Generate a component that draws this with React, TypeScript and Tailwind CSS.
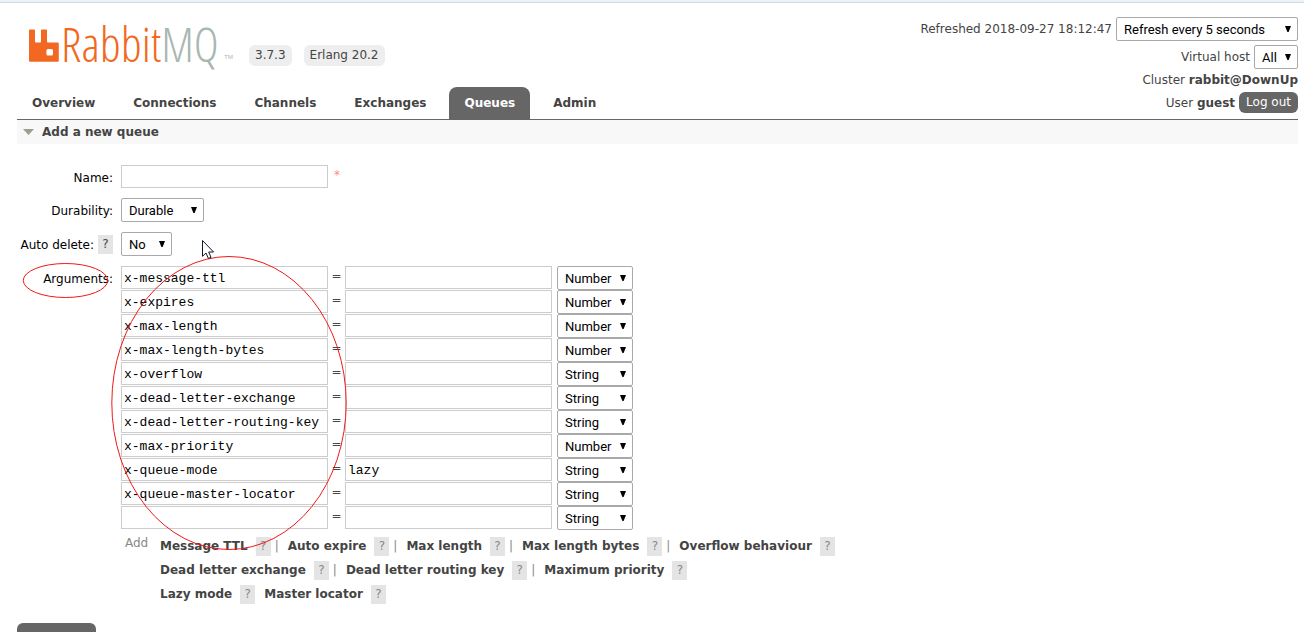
import React from "react";

type Kind = "Number" | "String";

const tabs = ["Overview", "Connections", "Channels", "Exchanges", "Queues", "Admin"];

const queueArguments: { key: string; value: string; kind: Kind }[] = [
  { key: "x-message-ttl", value: "", kind: "Number" },
  { key: "x-expires", value: "", kind: "Number" },
  { key: "x-max-length", value: "", kind: "Number" },
  { key: "x-max-length-bytes", value: "", kind: "Number" },
  { key: "x-overflow", value: "", kind: "String" },
  { key: "x-dead-letter-exchange", value: "", kind: "String" },
  { key: "x-dead-letter-routing-key", value: "", kind: "String" },
  { key: "x-max-priority", value: "", kind: "Number" },
  { key: "x-queue-mode", value: "lazy", kind: "String" },
  { key: "x-queue-master-locator", value: "", kind: "String" },
  { key: "", value: "", kind: "String" },
];

const shortcuts: { items: string[]; divided: boolean }[] = [
  {
    items: ["Message TTL", "Auto expire", "Max length", "Max length bytes", "Overflow behaviour"],
    divided: true,
  },
  { items: ["Dead letter exchange", "Dead letter routing key", "Maximum priority"], divided: true },
  { items: ["Lazy mode", "Master locator"], divided: false },
];

function Select({
  className,
  options,
  value,
  ...rest
}: {
  className: string;
  options: string[];
  value: string;
  id?: string;
  "aria-label"?: string;
}) {
  return (
    <span className={`relative inline-block h-6 align-top ${className}`}>
      <select
        {...rest}
        defaultValue={value}
        className="block h-6 w-full appearance-none rounded-xs border border-[#a9a9a9] bg-white pl-[7px] pr-4 pt-px font-['Roboto',sans-serif] text-[13px] leading-5 text-black"
      >
        {options.map((o) => (
          <option key={o}>{o}</option>
        ))}
      </select>
      <svg
        className="pointer-events-none absolute right-[7px] top-[9px] h-[6px] w-[6px]"
        viewBox="0 0 6 6"
        aria-hidden="true"
      >
        <path d="M0 0H6L3.6 6H2.4Z" fill="#000" />
      </svg>
    </span>
  );
}

function TextField({ value = "", ...rest }: { value?: string; id?: string; "aria-label"?: string }) {
  return (
    <input
      {...rest}
      type="text"
      defaultValue={value}
      className="block h-[23px] w-[207px] border border-[#ccc] bg-white px-0.5 pt-0.5 font-['Liberation_Mono',monospace] text-[13px] text-black"
    />
  );
}

function Help({ muted = false, topic }: { muted?: boolean; topic: string }) {
  return (
    <button
      type="button"
      aria-label={`Help: ${topic}`}
      className={`h-[19px] w-[15px] bg-[#e4e4e4] text-center leading-[19px] ${muted ? "text-[#888]" : "text-[#444]"}`}
    >
      ?
    </button>
  );
}

function Logo() {
  return (
    <a href="#/" className="flex w-[204px] items-end" aria-label="RabbitMQ">
      <svg className="h-[33px] w-[30px] shrink-0" viewBox="0 0 30 33" aria-hidden="true">
        <path
          fill="#f26822"
          fillRule="evenodd"
          d="M1 0.6H5.2Q6 .6 6 1.4V12.4Q6 13.4 7 13.4H11Q12 13.4 12 12.4V1.4Q12 .6 12.8 .6H17Q18 .6 18 1.6V12.4Q18 13.4 19 13.4H28.8Q29.8 13.4 29.8 14.4V31.8Q29.8 32.8 28.8 32.8H1Q0 32.8 0 31.8V1.6Q0 .6 1 .6ZM19 20Q17.4 20 17.4 21.6V25Q17.4 26.6 19 26.6H22.4Q24 26.6 24 25V21.6Q24 20 22.4 20Z"
        />
      </svg>
      <span className="pl-0.5 font-['Open_Sans_Condensed_Light','Roboto_Condensed_Light','Roboto_Condensed','Liberation_Sans',sans-serif] text-[48px] leading-9 text-[#f26822]">
        Rabbit<span className="text-[#a9b7b0]">MQ</span>
      </span>
      <span className="ml-auto font-['Liberation_Sans',sans-serif] text-[6px] leading-[9px] text-[#a9b7b0]">TM</span>
    </a>
  );
}

function Header() {
  return (
    <header className="flex items-end justify-between border-b border-[#666] pt-[14px]">
      <div>
        <div className="flex items-end gap-4 pb-[21px] pl-3">
          <div className="pb-1">
            <Logo />
          </div>
          <div className="flex gap-3">
            <span className="rounded-md bg-[#eee] px-1.5 leading-[21px]">3.7.3</span>
            <span className="rounded-md bg-[#eee] px-1.5 leading-[21px]">Erlang 20.2</span>
          </div>
        </div>
        <nav className="flex gap-2">
          {tabs.map((t) => (
            <a
              key={t}
              href={`#/${t.toLowerCase()}`}
              className={`rounded-t-lg px-[15px] font-bold leading-8 ${t === "Queues" ? "bg-[#666] text-white" : "text-[#444]"}`}
            >
              {t}
            </a>
          ))}
        </nav>
      </div>
      <div className="flex flex-col items-end pb-1.5">
        <div className="flex gap-1">
          <label htmlFor="refresh" className="leading-6">
            Refreshed 2018-09-27 18:12:47
          </label>
          <Select
            id="refresh"
            className="w-[182px]"
            value="Refresh every 5 seconds"
            options={["Refresh every 5 seconds", "Refresh every 30 seconds", "Do not refresh"]}
          />
        </div>
        <div className="mt-1 flex gap-1">
          <label htmlFor="vhost" className="leading-6">
            Virtual host
          </label>
          <Select id="vhost" className="w-[44px]" value="All" options={["All", "/"]} />
        </div>
        <p className="leading-[23px]">
          Cluster <b>rabbit@DownUp</b>
        </p>
        <div className="flex items-center gap-1">
          <span>
            User <b>guest</b>
          </span>
          <button type="button" className="rounded-md bg-[#666] px-[7px] leading-[21px] text-white">
            Log out
          </button>
        </div>
      </div>
    </header>
  );
}

function Annotations() {
  return (
    <svg
      className="pointer-events-none absolute left-0 top-0 h-[600px] w-[400px]"
      viewBox="0 0 400 600"
      fill="none"
      aria-hidden="true"
    >
      <ellipse cx="65.5" cy="280.5" rx="42.2" ry="17" stroke="#f01818" strokeWidth="1" />
      <ellipse cx="229" cy="403" rx="117.2" ry="146.5" stroke="#f01818" strokeWidth="1" />
      <path
        d="M202.5 240.5V256.3L206 253L208.4 258.4L211 257.3L208.7 252H213.6Z"
        fill="#fff"
        stroke="#111827"
        strokeWidth="1"
      />
    </svg>
  );
}

export default function App() {
  return (
    <div className="relative min-h-screen bg-white font-['DejaVu_Sans',sans-serif] text-[12px] leading-4 text-[#444]">
      <div className="h-[3px] border-b border-[#cddbe6] bg-[#edf2f7]" />
      <div className="pl-[17px] pr-1.5">
        <Header />
        <main>
          <h2 className="flex items-center bg-[#f8f8f8] pl-1.5 font-bold leading-6">
            <svg className="mr-2 h-1.5 w-[11px]" viewBox="0 0 11 6" aria-hidden="true">
              <path d="M0 0H11L5.5 6Z" fill="#a09c94" />
            </svg>
            Add a new queue
          </h2>
          <form className="pt-[21px]" onSubmit={(e) => e.preventDefault()}>
            <div className="grid grid-cols-[96px_1fr] gap-x-2 gap-y-2.5 leading-6">
              <label htmlFor="name" className="h-[23px] pt-px text-right text-black">
                Name:
              </label>
              <div className="flex gap-1.5">
                <TextField id="name" />
                <span className="leading-5 text-[#f88]">*</span>
              </div>

              <label htmlFor="durability" className="h-6 pt-px text-right text-black">
                Durability:
              </label>
              <div>
                <Select id="durability" className="w-[83px]" value="Durable" options={["Durable", "Transient"]} />
              </div>

              <div className="flex h-6 items-center justify-end gap-1 pt-px text-black">
                <label htmlFor="autodelete">Auto delete:</label>
                <Help topic="Auto delete" />
              </div>
              <div>
                <Select id="autodelete" className="w-[51px]" value="No" options={["No", "Yes"]} />
              </div>

              <span className="h-6 pt-px text-right text-black">Arguments:</span>
              <div>
                <table className="border-collapse">
                  <tbody>
                    {queueArguments.map((a, i) => (
                      <tr key={i} className="h-6">
                        <td className="p-0 align-top">
                          <TextField aria-label={`Argument ${i + 1} name`} value={a.key} />
                        </td>
                        <td className="w-[17px] p-0 text-center align-top leading-[21px]">=</td>
                        <td className="p-0 align-top">
                          <TextField aria-label={`Argument ${i + 1} value`} value={a.value} />
                        </td>
                        <td className="py-0 pl-[5px] pr-0 align-top">
                          <Select
                            aria-label={`Argument ${i + 1} type`}
                            className="w-[76px]"
                            value={a.kind}
                            options={["String", "Number", "Boolean", "List"]}
                          />
                        </td>
                      </tr>
                    ))}
                  </tbody>
                </table>
                <div className="flex pl-1 pt-1">
                  <span className="w-[35px] leading-[18px] text-[#888]">Add</span>
                  <ul>
                    {shortcuts.map((row) => (
                      <li key={row.items[0]} className="flex h-6 items-center">
                        {row.items.map((item, i) => (
                          <React.Fragment key={item}>
                            {i > 0 && row.divided && <span className="pl-1 text-[#888]">|</span>}
                            <button type="button" className={i > 0 ? "pl-[9px] font-bold" : "font-bold"}>
                              {item}
                            </button>
                            <span className="flex pl-2">
                              <Help muted topic={item} />
                            </span>
                          </React.Fragment>
                        ))}
                      </li>
                    ))}
                  </ul>
                </div>
              </div>
            </div>
            <button type="submit" className="mt-[17px] rounded-md bg-[#666] px-[7px] py-3 text-white">
              Add queue
            </button>
          </form>
        </main>
      </div>
      <Annotations />
    </div>
  );
}
